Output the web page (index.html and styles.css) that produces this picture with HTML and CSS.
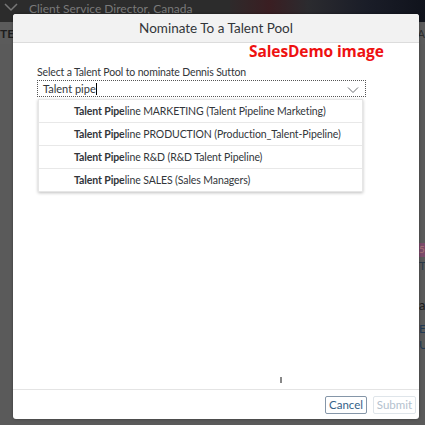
FILE: index.html
```html
<!DOCTYPE html>
<html>
<head>
<meta charset="utf-8">
<link rel="stylesheet" href="styles.css">
</head>
<body>
<div class="page">
  <div class="shellbar">
    <svg class="shell-chev" width="14" height="10" viewBox="0 0 14 10"><path d="M1 2 L7 8 L13 2" fill="none" stroke="#777" stroke-width="1.5"/></svg>
    <span class="shell-title">Client Service Director, Canada</span>
    <div class="banner"></div>
  </div>
  <div class="bgrow">
    <span class="bg-tes">TES</span>
    <span class="bg-right">/A</span>
  </div>
  <div class="bg-side">
    <span class="bg-badge">5</span>
    <span class="bg-text">Th</span>
    <span class="bg-text2">at</span>
    <span class="bg-link">E</span>
    <span class="bg-link2">U</span>
  </div>
</div>

<div class="dialog">
  <div class="dlg-header">Nominate To a Talent Pool</div>
  <div class="dlg-content">
    <div class="watermark">SalesDemo image</div>
    <label class="field-label">Select a Talent Pool to nominate Dennis Sutton</label>
    <div class="combo">
      <span class="combo-text">Talent pipe</span><span class="caret"></span>
      <svg class="combo-arrow" width="12" height="8" viewBox="0 0 12 8"><path d="M1 1.5 L6 6.5 L11 1.5" fill="none" stroke="#6a6d70" stroke-width="1"/></svg>
    </div>
    <ul class="suggest">
      <li><b>Talent Pipe</b>line MARKETING (Talent Pipeline Marketing)</li>
      <li><b>Talent Pipe</b>line PRODUCTION (Production_Talent-Pipeline)</li>
      <li><b>Talent Pipe</b>line R&amp;D (R&amp;D Talent Pipeline)</li>
      <li><b>Talent Pipe</b>line SALES (Sales Managers)</li>
    </ul>
    <span class="ibeam"></span>
  </div>
  <div class="dlg-footer">
    <button class="btn btn-cancel">Cancel</button>
    <button class="btn btn-submit">Submit</button>
  </div>
</div>
</body>
</html>
```

FILE: styles.css
```css
html, body {
  margin: 0;
  padding: 0;
  width: 425px;
  height: 425px;
  overflow: hidden;
  font-family: Lato, "Open Sans", Arial, sans-serif;
}
body {
  background: #575757;
}
.page {
  position: relative;
  width: 425px;
  height: 425px;
  background: #5a5a5a;
}
.shellbar {
  height: 22px;
  background: #2c2c2c;
  display: flex;
  align-items: center;
  gap: 11px;
  padding-left: 4px;
  overflow: hidden;
  position: relative;
}
.shell-title {
  color: #7a7a7a;
  font-size: 12px;
  margin-top: -6px;
}
.shell-chev {
  margin-top: -8px;
}
.banner {
  position: absolute;
  left: 230px;
  top: 0;
  width: 195px;
  height: 22px;
  background: linear-gradient(90deg, #2e2a2b 0%, #3a1e22 20%, #2b2b2f 40%, #1a1d28 70%, #10131c 100%);
}
.bgrow {
  height: 22px;
  display: flex;
  justify-content: space-between;
  align-items: center;
  background: #5b5b5b;
}
.bg-tes {
  font-size: 12px;
  font-weight: bold;
  color: #1e1e1e;
}
.bg-right {
  font-size: 11px;
  color: #2c2c2c;
}
.bg-side {
  position: absolute;
  left: 419px;
  top: 240px;
  width: 10px;
  height: 120px;
}
.bg-side span {
  position: absolute;
  left: 0;
  font-size: 12px;
}
.bg-badge {
  top: 3px;
  background: #7b4a6a;
  color: #a77;
  width: 10px;
  height: 14px;
  font-size: 10px !important;
}
.bg-text { top: 18px; color: #2a3a4a; }
.bg-text2 { top: 57px; color: #1a1a1a; font-size: 13px !important; }
.bg-link { top: 81px; color: #223a55; }
.bg-link2 { top: 97px; color: #223a55; }

.dialog {
  position: absolute;
  left: 13px;
  top: 14px;
  width: 406px;
  height: 405px;
  background: #fff;
  border-radius: 3px;
  box-shadow: 0 0 3px rgba(0,0,0,0.4);
  display: flex;
  flex-direction: column;
  overflow: hidden;
}
.dlg-header {
  height: 28px;
  flex: none;
  background: #f2f2f2;
  border-bottom: 1px solid #dcdcdc;
  display: flex;
  align-items: center;
  justify-content: center;
  font-size: 13.5px;
  color: #32363a;
}
.dlg-content {
  flex: 1;
  position: relative;
  padding: 22px 0 0 24px;
}
.watermark {
  position: absolute;
  left: 236px;
  top: -3px;
  font-family: "Open Sans", Arial, sans-serif;
  font-weight: bold;
  font-size: 15.5px;
  color: #ee1111;
  letter-spacing: -0.1px;
}
.field-label {
  display: block;
  font-size: 10.5px;
  letter-spacing: -0.15px;
  color: #32363a;
  line-height: 14px;
}
.combo {
  margin-top: 1px;
  width: 322px;
  height: 15px;
  border: 1px dotted #555;
  display: flex;
  align-items: center;
  padding-left: 5px;
  position: relative;
  font-size: 11px;
  color: #32363a;
}
.caret {
  display: inline-block;
  width: 1px;
  height: 12px;
  background: #000;
}
.combo-arrow {
  position: absolute;
  right: 6px;
  top: 5px;
}
.suggest {
  position: absolute;
  left: 25px;
  top: 56px;
  width: 323px;
  margin: 0;
  padding: 0;
  list-style: none;
  background: #fff;
  border: 1px solid #e6e6e6;
  box-shadow: 0 1px 3px rgba(0,0,0,0.25);
}
.suggest li {
  height: 22px;
  line-height: 22px;
  padding-left: 35px;
  font-size: 10.5px;
  letter-spacing: -0.1px;
  color: #32363a;
  border-top: 1px solid #e8e8e8;
  white-space: nowrap;
}
.suggest li:first-child {
  border-top: none;
}
.suggest b {
  font-weight: bold;
}
.ibeam {
  position: absolute;
  left: 267px;
  top: 334px;
  width: 2px;
  height: 6px;
  background: #888;
}
.dlg-footer {
  height: 29px;
  flex: none;
  border-top: 1px solid #e4e4e4;
  display: flex;
  justify-content: flex-end;
  align-items: center;
  gap: 6px;
  padding-right: 3px;
}
.btn {
  height: 18px;
  padding: 0 2px;
  font-family: Lato, Arial, sans-serif;
  font-size: 11.5px;
  background: #fff;
  border-radius: 2px;
  line-height: 14px;
}
.btn-cancel {
  border: 1px solid #8596a8;
  color: #346187;
  width: 42px;
}
.btn-submit {
  border: 1px solid #dfe5ea;
  color: #b3c1ce;
  width: 43px;
}
```
